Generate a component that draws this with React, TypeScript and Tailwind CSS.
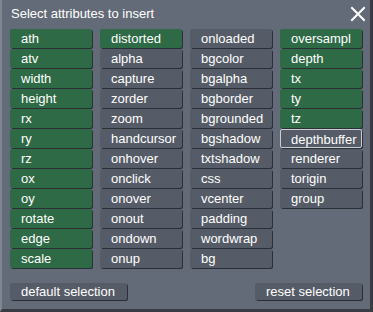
import React from "react"

type Attr = { name: string; on?: boolean; focus?: boolean }

const columns: Attr[][] = [
  [
    { name: "ath", on: true },
    { name: "atv", on: true },
    { name: "width", on: true },
    { name: "height", on: true },
    { name: "rx", on: true },
    { name: "ry", on: true },
    { name: "rz", on: true },
    { name: "ox", on: true },
    { name: "oy", on: true },
    { name: "rotate", on: true },
    { name: "edge", on: true },
    { name: "scale", on: true },
  ],
  [
    { name: "distorted", on: true },
    { name: "alpha" },
    { name: "capture" },
    { name: "zorder" },
    { name: "zoom" },
    { name: "handcursor" },
    { name: "onhover" },
    { name: "onclick" },
    { name: "onover" },
    { name: "onout" },
    { name: "ondown" },
    { name: "onup" },
  ],
  [
    { name: "onloaded" },
    { name: "bgcolor" },
    { name: "bgalpha" },
    { name: "bgborder" },
    { name: "bgrounded" },
    { name: "bgshadow" },
    { name: "txtshadow" },
    { name: "css" },
    { name: "vcenter" },
    { name: "padding" },
    { name: "wordwrap" },
    { name: "bg" },
  ],
  [
    { name: "oversampl", on: true },
    { name: "depth", on: true },
    { name: "tx", on: true },
    { name: "ty", on: true },
    { name: "tz", on: true },
    { name: "depthbuffer", focus: true },
    { name: "renderer" },
    { name: "torigin" },
    { name: "group" },
  ],
]

function AttrButton({ attr }: { attr: Attr }) {
  const base =
    "h-[19px] w-[82px] overflow-hidden whitespace-nowrap rounded-[2px] text-left text-[13px] leading-[19px] text-white shadow-[1px_1px_0_#2c3036]"
  if (attr.focus) {
    return (
      <button className={`${base} border border-[#c9cdd3] bg-[#565c67] pl-[10px] leading-[17px]`}>{attr.name}</button>
    )
  }
  return (
    <button className={`${base} pl-[11px] ${attr.on ? "bg-[#2e6a45]" : "bg-[#565c67]"}`}>{attr.name}</button>
  )
}

export default function App() {
  return (
    <div
      className="flex h-[312px] w-[373px] flex-col border-b-[3px] border-l-2 border-r-[3px] border-b-[#383c43] border-l-[#7f8691] border-r-[#383c43] bg-[#646b78] px-[8px] text-white"
      style={{ fontFamily: '"Liberation Sans", Arial, sans-serif' }}
    >
      <div className="flex h-[27px] items-center justify-between">
        <span className="pl-[1px] text-[13px] leading-[15px]">Select attributes to insert</span>
        <svg width="16" height="16" viewBox="0 0 16 16" className="mr-[-3px] mt-[1px]">
          <path d="M3 2 L15 14 M15 2 L3 14" stroke="white" strokeWidth="2" strokeLinecap="square" />
        </svg>
      </div>

      <div className="mt-[2px] grid h-[239px] grid-cols-[repeat(4,82px)] gap-x-[8px]">
        {columns.map((col, ci) => (
          <div key={ci} className="flex flex-col gap-[1px]">
            {col.map((attr) => (
              <AttrButton key={attr.name} attr={attr} />
            ))}
          </div>
        ))}
      </div>

      <div className="mt-[15px] flex justify-between">
        <button className="h-[17px] w-[117px] rounded-[2px] bg-[#565c67] pl-[11px] text-left text-[13px] leading-[17px] shadow-[1px_1px_0_#2c3036]">
          default selection
        </button>
        <button className="h-[17px] w-[107px] rounded-[2px] bg-[#565c67] pl-[11px] text-left text-[13px] leading-[17px] shadow-[1px_1px_0_#2c3036]">
          reset selection
        </button>
      </div>
    </div>
  )
}
